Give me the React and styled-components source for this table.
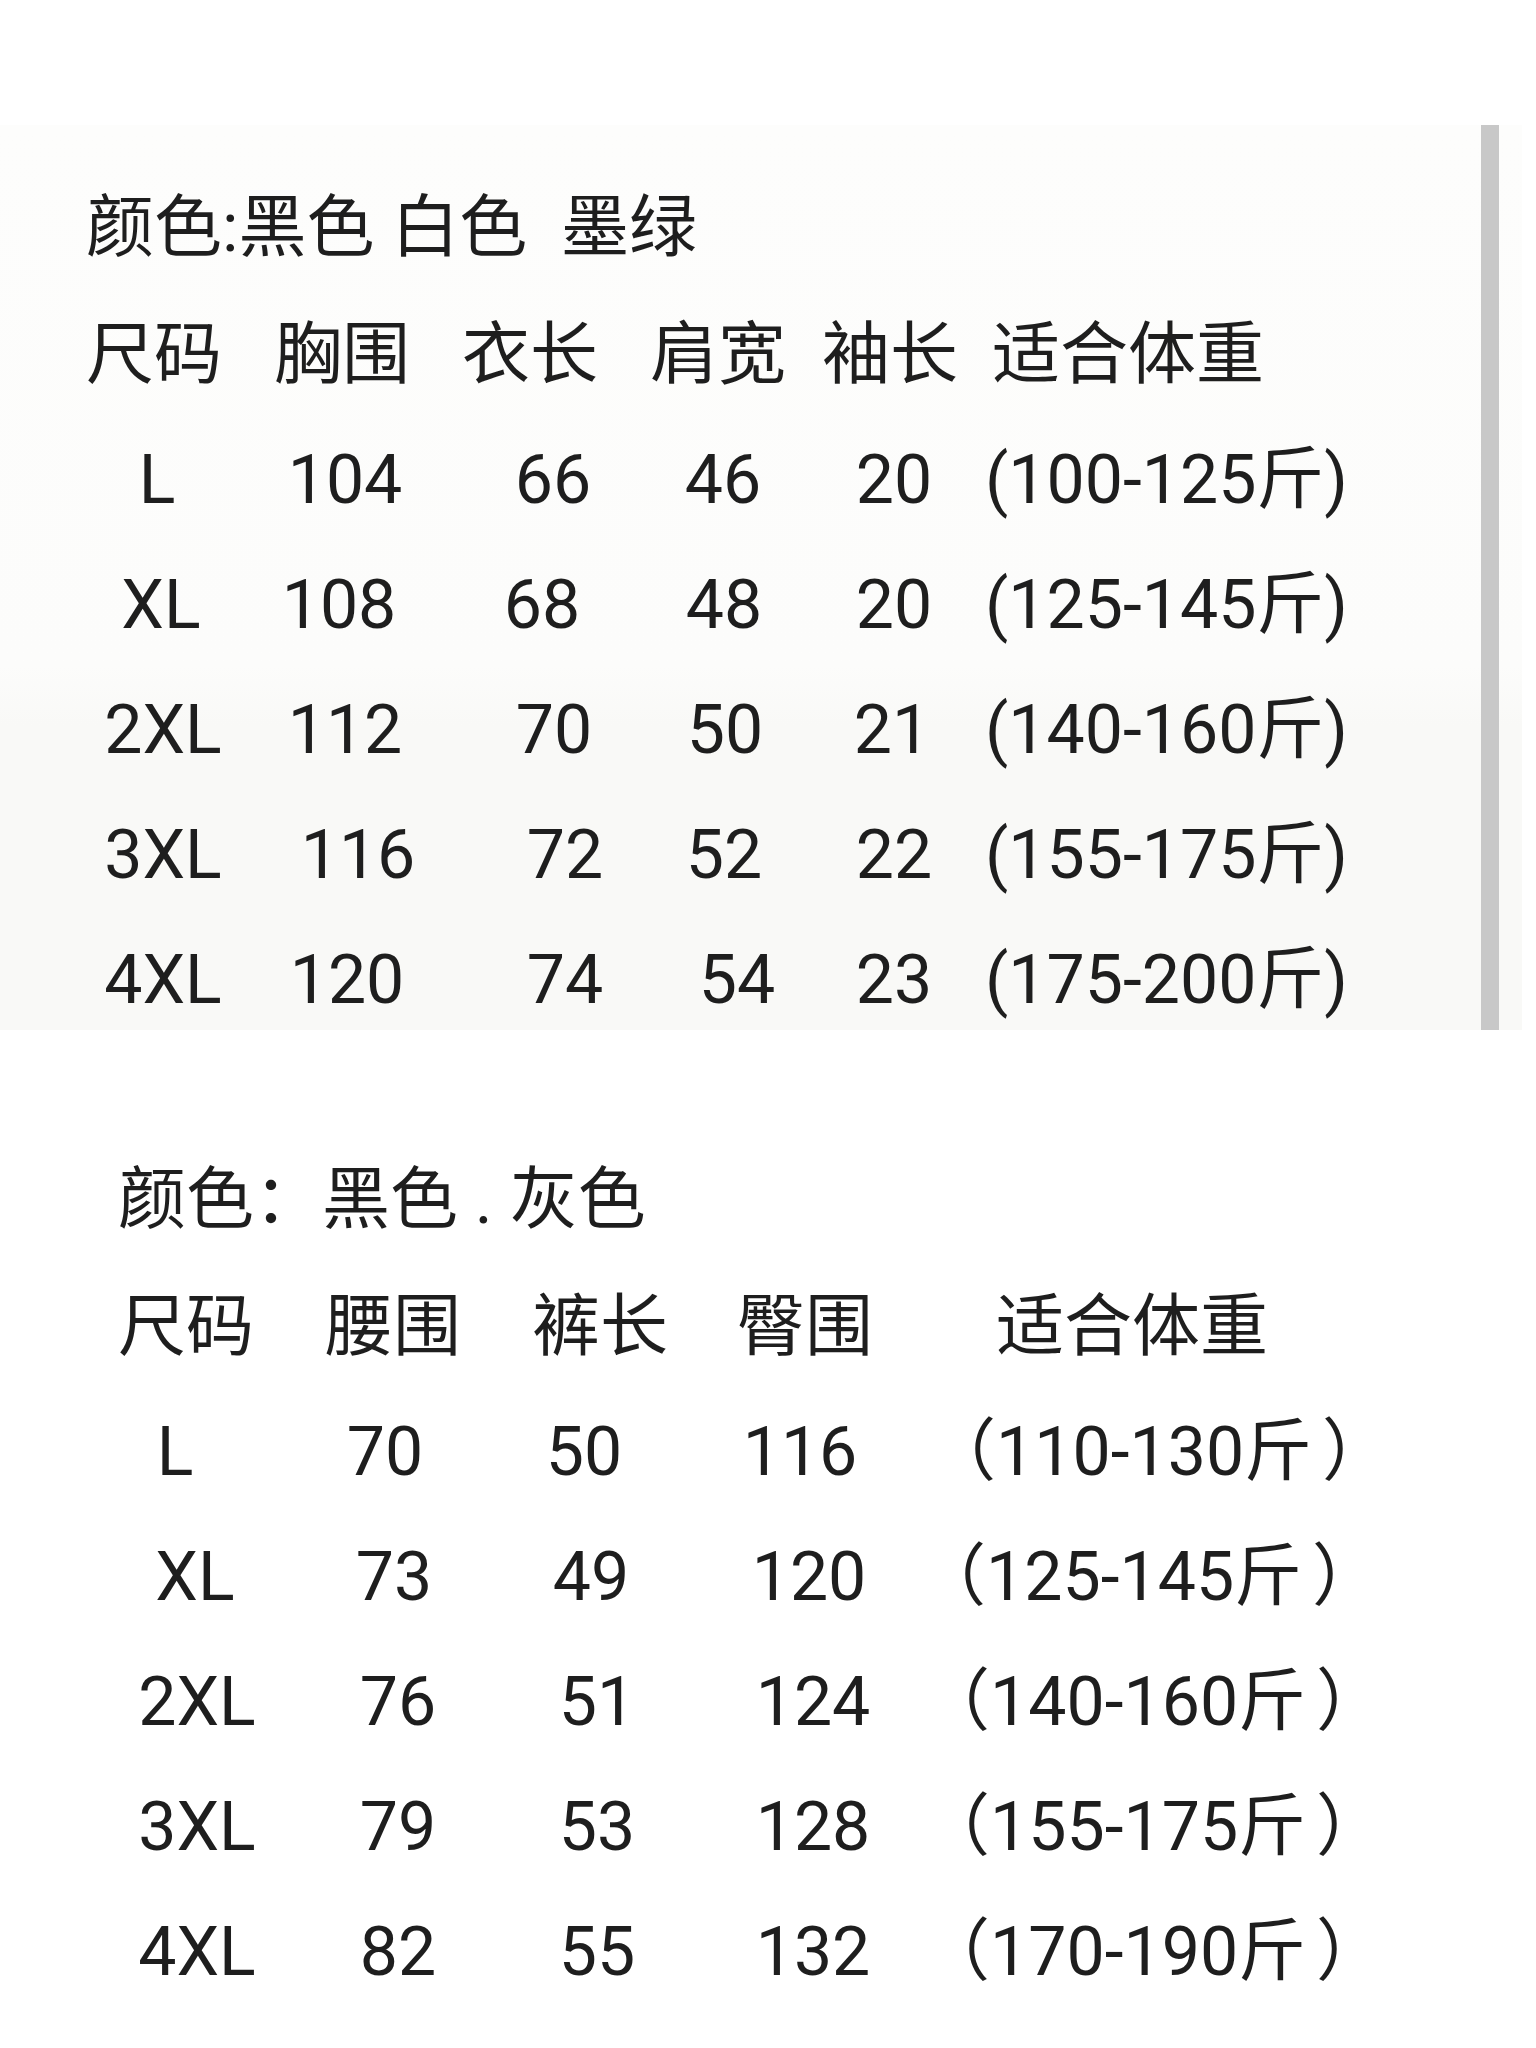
import React from "react";
import styled, { createGlobalStyle } from "styled-components";

const topHeader = [
  ["尺码", -9],
  ["胸围", -3],
  ["衣长", -24],
  ["肩宽", -6],
  ["袖长", -4],
  ["适合体重", 7],
];

const topRows = [
  [["L", -6], ["104", 0], ["66", -1], ["46", -1], ["20", 0], ["(100-125斤)", 0]],
  [["XL", -2], ["108", -6], ["68", -12], ["48", 0], ["20", 0], ["(125-145斤)", 0]],
  [["2XL", 0], ["112", 0], ["70", 0], ["50", 1], ["21", -2], ["(140-160斤)", 0]],
  [["3XL", 0], ["116", 13], ["72", 11], ["52", 0], ["22", 0], ["(155-175斤)", 0]],
  [["4XL", 0], ["120", 2], ["74", 11], ["54", 13], ["23", 0], ["(175-200斤)", 0]],
];

const bottomHeader = [
  ["尺码", -11],
  ["腰围", -5],
  ["裤长", 3],
  ["臀围", -8],
  ["适合体重", 84],
];

const bottomRows = [
  [["L", -22], ["70", -13], ["50", -13], ["116", -13], ["（110-130斤）", 16]],
  [["XL", -2], ["73", -4], ["49", -6], ["120", -4], ["（125-145斤）", 6]],
  [["2XL", 0], ["76", 0], ["51", 0], ["124", 0], ["（140-160斤）", 10]],
  [["3XL", 0], ["79", 0], ["53", 0], ["128", 0], ["（155-175斤）", 10]],
  [["4XL", 0], ["82", 0], ["55", 0], ["132", 0], ["（170-190斤）", 10]],
];

// full-width closing bracket sits a little further out in the photo
function Weight({ text }) {
  if (!text.endsWith("）")) return text;
  return (
    <>
      {text.slice(0, -1)}
      <Closing>）</Closing>
    </>
  );
}

function SizeTable({ cols, offset, header, rows }) {
  const last = header.length - 1;
  const renderRow = (cells, key) => (
    <Row key={key} $cols={cols}>
      {cells.map(([text, shift], i) => (
        <Cell key={i} $left={i === last} $shift={shift}>
          {i === last ? <Weight text={text} /> : text}
        </Cell>
      ))}
    </Row>
  );
  return (
    <Table $offset={offset}>
      {renderRow(header, "head")}
      {rows.map((r, i) => renderRow(r, i))}
    </Table>
  );
}

function App() {
  return (
    <>
      <GlobalStyle />
      <Page>
        <Panel>
          <Section>
            <Title $offset={86}>颜色:黑色 白色  墨绿</Title>
            <SizeTable
              cols="128px 236px 182px 158px 182px 1fr"
              offset={99}
              header={topHeader}
              rows={topRows}
            />
          </Section>
          <ScrollBar />
        </Panel>
        <Section $top={120}>
          <Title $offset={118}>颜色：黑色 . 灰色</Title>
          <SizeTable
            cols="238px 164px 234px 198px 1fr"
            offset={78}
            header={bottomHeader}
            rows={bottomRows}
          />
        </Section>
      </Page>
    </>
  );
}

const GlobalStyle = createGlobalStyle`
  html, body {
    margin: 0;
    padding: 0;
    background: #ffffff;
  }
  body {
    font-family: Roboto, "Noto Sans CJK SC", sans-serif;
    color: #1e1e1e;
  }
`;

const Page = styled.div`
  width: 1536px;
  min-height: 2048px;
  padding-top: 125px;
  box-sizing: border-box;
  background: #ffffff;
`;

const Panel = styled.div`
  display: flex;
  margin-right: 14px;
  background: linear-gradient(
    to bottom,
    #fdfdfc 0px,
    #fcfcfb 540px,
    #f9f9f7 600px,
    #f9f9f7 100%
  );
`;

const ScrollBar = styled.div`
  width: 18px;
  flex-shrink: 0;
  margin-right: 23px;
  background: #c8c8c8;
`;

const Section = styled.div`
  flex: 1;
  display: flex;
  flex-direction: column;
  padding-top: ${(p) => (p.$top ? p.$top : 53)}px;
  font-size: 68px;
`;

const Title = styled.div`
  height: 100px;
  line-height: 100px;
  margin: 0 0 27px ${(p) => p.$offset}px;
  white-space: pre;
`;

const Table = styled.div`
  display: flex;
  flex-direction: column;
  gap: 25px;
  margin-left: ${(p) => p.$offset}px;
`;

const Row = styled.div`
  display: grid;
  grid-template-columns: ${(p) => p.$cols};
  height: 100px;
  line-height: 100px;
`;

const Cell = styled.div`
  display: flex;
  justify-content: ${(p) => (p.$left ? "flex-start" : "center")};
  padding-left: ${(p) => (p.$left ? p.$shift : Math.max(0, p.$shift * 2))}px;
  padding-right: ${(p) => (p.$left ? 0 : Math.max(0, -p.$shift * 2))}px;
  white-space: nowrap;
`;

const Closing = styled.span`
  margin-left: 10px;
`;

export default App;
